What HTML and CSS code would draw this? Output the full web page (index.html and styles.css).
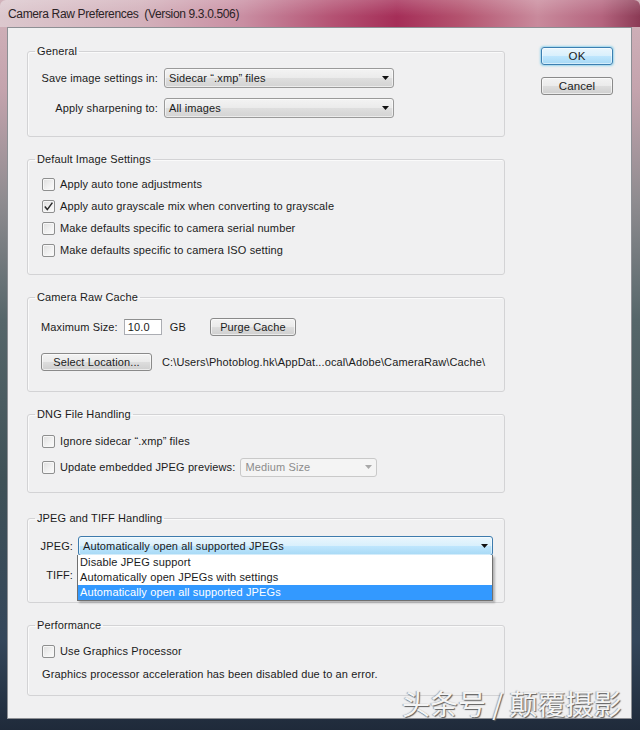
FILE: index.html
```html
<!DOCTYPE html>
<html>
<head>
<meta charset="utf-8">
<title>Camera Raw Preferences</title>
<link rel="stylesheet" href="styles.css">
</head>
<body>
<div class="window">
  <div class="titlebar">Camera Raw Preferences&nbsp; (Version 9.3.0.506)</div>
  <div class="client">
    <div class="groups">
      <fieldset class="group g-general">
        <legend>General</legend>
        <div class="form-grid general-grid">
          <span class="lbl">Save image settings in:</span>
          <div class="combo w230"><span>Sidecar “.xmp” files</span><svg class="arrow" width="7" height="4" viewBox="0 0 7 4"><path d="M0 0h7L3.5 4z"/></svg></div>
          <span class="lbl">Apply sharpening to:</span>
          <div class="combo w230"><span>All images</span><svg class="arrow" width="7" height="4" viewBox="0 0 7 4"><path d="M0 0h7L3.5 4z"/></svg></div>
        </div>
      </fieldset>

      <fieldset class="group g-default">
        <legend>Default Image Settings</legend>
        <div class="check-list">
          <div class="check-row"><span class="cb"></span><span>Apply auto tone adjustments</span></div>
          <div class="check-row"><span class="cb checked"><svg width="11" height="11" viewBox="0 0 11 11"><path d="M1.8 5.6 L4.3 8.6 L9.4 1.6" fill="none" stroke="#2a2a2a" stroke-width="1.5"/></svg></span><span>Apply auto grayscale mix when converting to grayscale</span></div>
          <div class="check-row"><span class="cb"></span><span>Make defaults specific to camera serial number</span></div>
          <div class="check-row"><span class="cb"></span><span>Make defaults specific to camera ISO setting</span></div>
        </div>
      </fieldset>

      <fieldset class="group g-cache">
        <legend>Camera Raw Cache</legend>
        <div class="cache-body">
          <div class="cache-row">
            <span>Maximum Size:</span>
            <span class="textbox">10.0</span>
            <span class="unit">GB</span>
            <span class="btn purge">Purge Cache</span>
          </div>
          <div class="cache-row row2">
            <span class="btn select-loc">Select Location...</span>
            <span class="path">C:\Users\Photoblog.hk\AppDat...ocal\Adobe\CameraRaw\Cache\</span>
          </div>
        </div>
      </fieldset>

      <fieldset class="group g-dng">
        <legend>DNG File Handling</legend>
        <div class="dng-body">
          <div class="check-row h20"><span class="cb"></span><span>Ignore sidecar “.xmp” files</span></div>
          <div class="check-row h20"><span class="cb"></span><span>Update embedded JPEG previews:</span><div class="combo disabled w137"><span>Medium Size</span><svg class="arrow" width="7" height="4" viewBox="0 0 7 4"><path d="M0 0h7L3.5 4z"/></svg></div></div>
        </div>
      </fieldset>

      <fieldset class="group g-jpeg">
        <legend>JPEG and TIFF Handling</legend>
        <div class="form-grid jpeg-grid">
          <span class="lbl">JPEG:</span>
          <div class="combo active w414"><span>Automatically open all supported JPEGs</span><svg class="arrow" width="7" height="4" viewBox="0 0 7 4"><path d="M0 0h7L3.5 4z"/></svg></div>
          <span class="lbl">TIFF:</span>
          <div class="combo w414"></div>
        </div>
        <ul class="dropdown-list">
          <li>Disable JPEG support</li>
          <li>Automatically open JPEGs with settings</li>
          <li class="selected">Automatically open all supported JPEGs</li>
        </ul>
      </fieldset>

      <fieldset class="group g-perf">
        <legend>Performance</legend>
        <div class="perf-body">
          <div class="check-row h20"><span class="cb"></span><span>Use Graphics Processor</span></div>
          <div class="note">Graphics processor acceleration has been disabled due to an error.</div>
        </div>
      </fieldset>
    </div>
    <div class="buttons">
      <span class="btn btn-default">OK</span>
      <span class="btn">Cancel</span>
    </div>
  </div>
  <div class="watermark">头条号 / 颠覆摄影</div>
</div>
</body>
</html>
```

FILE: styles.css
```css
* { box-sizing: border-box; }

html, body {
  margin: 0;
  padding: 0;
}

body {
  width: 640px;
  height: 730px;
  overflow: hidden;
  font-family: "Liberation Sans", Arial, sans-serif;
  font-size: 11px;
  letter-spacing: 0.12px;
  color: #1b1b1b;
}

.window {
  position: relative;
  width: 640px;
  height: 730px;
  padding: 0 8px 11px 7px;
  display: flex;
  flex-direction: column;
  background: linear-gradient(to bottom, #d2b3bb 0px, #c4a3ad 90px, #8f8c90 200px, #56666a 320px, #3f5157 480px, #34465a 640px, #1f2a3a 730px);
}

.titlebar {
  height: 27px;
  margin: 0 -8px 0 -7px;
  padding: 8px 0 0 8px;
  font-size: 12px;
  letter-spacing: -0.35px;
  line-height: 13px;
  color: #2b2326;
  background:
    linear-gradient(to bottom, rgba(255,255,255,0.18), rgba(255,255,255,0) 60%),
    linear-gradient(90deg, #dcc8ce 0%, #d3b1bb 22%, #c98ea2 38%, #b45273 52%, #a52e58 62%, #b4536f 72%, #c98a9c 84%, #b4647e 94%, #8b3a55 100%);
  border-radius: 6px 6px 0 0;
}

.client {
  flex: 1;
  display: flex;
  background: #f0f0f1;
  border: 1px solid #8d8f94;
  padding: 17px 0 0 19px;
}

.groups {
  width: 478px;
  display: flex;
  flex-direction: column;
  gap: 16px;
}

.group {
  position: relative;
  margin: 0;
  padding: 0;
  border: 1px solid #d3d3d5;
  border-radius: 3px;
  box-shadow: inset 1px 1px 0 #fafafa;
  min-width: 0;
}

.group legend {
  margin-left: 7px;
  padding: 0 2px;
  font-size: 11px;
  line-height: 13px;
  color: #1b1b1b;
}

/* ---- General ---- */
.form-grid {
  display: grid;
  align-items: center;
  justify-items: end;
}

.general-grid {
  grid-template-columns: 117px 230px;
  column-gap: 6px;
  row-gap: 10px;
  padding: 10px 0 18px 13px;
}

.lbl { white-space: nowrap; }

.combo {
  justify-self: start;
  height: 20px;
  display: flex;
  align-items: center;
  justify-content: space-between;
  padding: 0 4px 0 4px;
  border: 1px solid #9a9a9a;
  border-radius: 3px;
  background: linear-gradient(to bottom, #f3f3f3 0%, #ebebeb 48%, #dedede 52%, #d3d3d3 100%);
  box-shadow: inset 0 0 0 1px rgba(255,255,255,0.55);
  white-space: nowrap;
}

.combo .arrow path { fill: #111; }

.w230 { width: 230px; }
.w137 { width: 137px; height: 19px; }
.w414 { width: 415px; }

.combo.disabled {
  background: #f4f4f4;
  border-color: #c9c9c9;
  color: #8c8c8c;
  box-shadow: none;
  margin-left: 5px;
}
.combo.disabled .arrow path { fill: #a8a8a8; }

.combo.active {
  border-color: #3d7bad;
  background: linear-gradient(to bottom, #eaf6fd 0%, #d9f0fc 48%, #bee6fd 52%, #a7d9f5 100%);
  box-shadow: inset 0 0 0 1px rgba(255,255,255,0.5);
}

/* ---- Checkboxes ---- */
.check-list {
  padding: 7px 0 13px 14px;
}

.check-row {
  display: flex;
  align-items: center;
  height: 22px;
  white-space: nowrap;
}

.check-row.h20 { height: 20px; }

.cb {
  width: 13px;
  height: 13px;
  flex: none;
  margin-right: 5px;
  border: 1px solid #8e8f8f;
  border-radius: 2px;
  background: linear-gradient(135deg, #dedede 0%, #f2f2f2 60%, #fbfbfb 100%);
  box-shadow: inset 0 0 0 1px #f7f7f7;
  display: flex;
  align-items: center;
  justify-content: center;
}

.cb svg { display: block; }

/* ---- Cache ---- */
.cache-body {
  padding: 14px 0 20px 13px;
  display: flex;
  flex-direction: column;
  gap: 17px;
}

.cache-row {
  display: flex;
  align-items: center;
  height: 18px;
  white-space: nowrap;
}

.textbox {
  width: 38px;
  height: 16px;
  margin-left: 6px;
  padding: 0 0 0 3px;
  line-height: 14px;
  background: #fff;
  border: 1px solid #abadb3;
  border-top-color: #8e8f8f;
}

.unit { margin-left: 8px; }

.btn {
  display: flex;
  align-items: center;
  justify-content: center;
  height: 18px;
  border: 1px solid #8a8a8a;
  border-radius: 3px;
  background: linear-gradient(to bottom, #f3f3f3 0%, #ebebeb 48%, #dddddd 52%, #cfcfcf 100%);
  box-shadow: inset 0 0 0 1px rgba(255,255,255,0.6);
  color: #1b1b1b;
  white-space: nowrap;
}

.purge {
  width: 86px;
  margin-left: 24px;
}

.select-loc {
  width: 111px;
}

.path { margin-left: 10px; }

/* ---- DNG ---- */
.dng-body {
  padding: 10px 0 15px 14px;
  display: flex;
  flex-direction: column;
  gap: 6px;
}

/* ---- JPEG ---- */
.g-jpeg { margin-top: 3px; }

.jpeg-grid {
  grid-template-columns: 32px 415px;
  column-gap: 5px;
  row-gap: 9px;
  padding: 11px 0 17px 13px;
}

.dropdown-list {
  position: absolute;
  left: 49px;
  top: 30px;
  width: 416px;
  margin: 0;
  padding: 0;
  list-style: none;
  background: #fff;
  border: 1px solid #707070;
  border-top: none;
  box-shadow: 2px 2px 2px rgba(0,0,0,0.25);
}

.dropdown-list li {
  height: 15px;
  line-height: 15px;
  padding-left: 2px;
  white-space: nowrap;
}

.dropdown-list li.selected {
  background: #3399ff;
  color: #fff;
}

/* ---- Performance ---- */
.perf-body {
  padding: 9px 0 12px 14px;
  display: flex;
  flex-direction: column;
  gap: 4px;
}

.note {
  height: 18px;
  line-height: 18px;
  padding-left: 0;
}

/* ---- Buttons ---- */
.buttons {
  margin-left: 36px;
  padding-top: 2px;
  width: 72px;
  display: flex;
  flex-direction: column;
  gap: 12px;
}

.buttons .btn { height: 18px; font-size: 11.5px; }

.btn-default {
  border-color: #3c7fb1;
  background: linear-gradient(to bottom, #eaf6fd 0%, #d9f0fc 48%, #bee6fd 52%, #a7d9f5 100%);
  box-shadow: 0 0 2px 1px rgba(80, 190, 230, 0.55), inset 0 0 0 1px rgba(255,255,255,0.5);
}

/* ---- Watermark ---- */
.watermark {
  position: absolute;
  left: 402px;
  top: 687px;
  font-family: "Noto Sans CJK SC", "Liberation Sans", sans-serif;
  font-size: 28px;
  line-height: 32px;
  letter-spacing: 0;
  color: #f4f4f4;
  text-shadow: 1px 1px 1px #5f5f5f, -1px 0 1px rgba(90,90,90,0.5);
  white-space: nowrap;
}
```
